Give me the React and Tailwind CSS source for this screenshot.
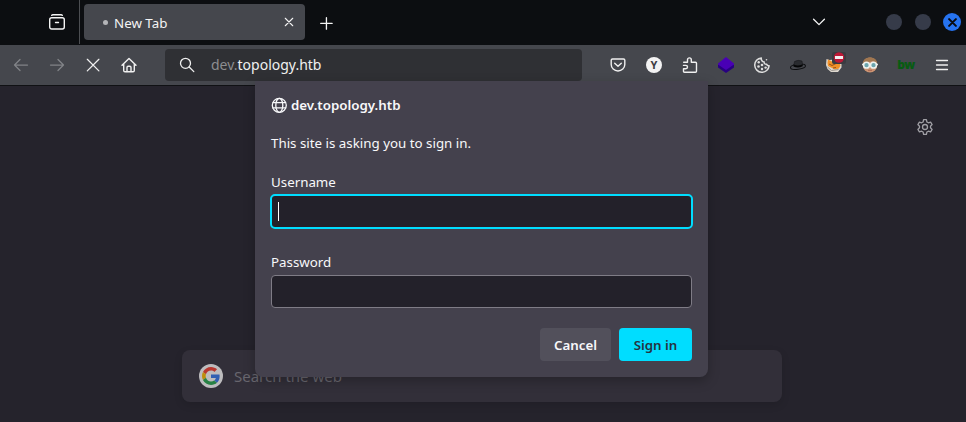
import React from 'react';

const Svg = ({ size = 16, className = '', children, sw = 1.25 }) => (
  <svg width={size} height={size} viewBox="0 0 16 16" fill="none" stroke="currentColor" strokeWidth={sw} strokeLinecap="round" strokeLinejoin="round" className={`block shrink-0 ${className}`}>
    {children}
  </svg>
);

const Slot = ({ children, className = '' }) => (
  <div className={`flex h-10 w-9 shrink-0 items-center justify-center ${className}`}>{children}</div>
);

function TitleBar() {
  return (
    <div className="flex h-[45px] shrink-0 items-start bg-[#0c0e11] text-[#f4f4f4]">
      <div className="flex h-11 w-20 items-center justify-end border-r border-[#4c4e52] pr-[14px]">
        <Svg sw={1.4}>
          <path d="M2.700 1.300C3 .8 3.500 .7 4 .7h8c.5 0 1 .1 1.300.6" />
          <rect x=".7" y="3.700" width="14.600" height="11.300" rx="2" />
          <path d="M6.500 8.500h3" />
        </Svg>
      </div>
      <div className="mt-1 ml-1 flex h-9 w-[221px] items-center rounded bg-[#45474d]">
        <span className="ml-[19px] h-[5px] w-[5px] rounded-full bg-[#b4b5b8]" />
        <span className="ml-[6px] pt-[2px] text-[13.330px] leading-5">New Tab</span>
        <Svg size={10} sw={1.700} className="mr-[11px] ml-auto"><path d="M2 2l12 12M14 2L2 14" /></Svg>
      </div>
      <Svg size={14} sw={1.500} className="mt-4 ml-[14px]"><path d="M8.500 2v13M2 8.500h13" /></Svg>
      <Svg size={14} sw={1.500} className="mt-[15px] ml-auto"><path d="M1.800 4.800L8 11l6.200-6.200" /></Svg>
      <div className="mt-[13px] mr-[5px] ml-[60px] flex items-center">
        <span className="h-4 w-4 rounded-full bg-[#363b49]" />
        <span className="ml-[13px] h-4 w-4 rounded-full bg-[#363b49]" />
        <span className="ml-[12px] flex h-[18px] w-[18px] items-center justify-center rounded-full bg-[#2673f0] text-[#090b10]">
          <Svg size={9} sw={3.600}><path d="M2 2l12 12M14 2L2 14" /></Svg>
        </span>
      </div>
    </div>
  );
}

function Toolbar() {
  return (
    <div className="flex h-[41px] shrink-0 items-start border-b border-[#101114] bg-[#45474d] pl-[3px] text-[#f0f0f0]">
      <Slot className="text-[#818387]"><Svg><path d="M14.500 8h-13M7 2.500L1.500 8 7 13.500" /></Svg></Slot>
      <Slot className="text-[#818387]"><Svg><path d="M1.500 8h13M9 2.500L14.500 8 9 13.500" /></Svg></Slot>
      <Slot><Svg><path d="M2.300 2.300l11.600 11.600M13.900 2.300L2.300 13.900" /></Svg></Slot>
      <Slot>
        <Svg sw={1.400} className="-ml-px">
          <path d="M1 8.300L8 1.400l7 6.900M2.700 7v6.500c0 .8.500 1.300 1.300 1.300h8c.8 0 1.300-.5 1.300-1.300V7" />
          <path d="M6 14.500V10.500c0-.8.5-1.200 1.200-1.200h1.600c.7 0 1.200.4 1.200 1.200v4" />
        </Svg>
      </Slot>
      <div className="mt-1 ml-[18px] flex h-8 w-[417px] items-center rounded bg-[#2f3034]">
        <Svg className="ml-[14px]" sw={1.300}><circle cx="6.500" cy="6.300" r="5" /><path d="M10.200 10l4.600 4.600" /></Svg>
        <span className="ml-4 text-[14px] leading-5"><span className="text-[#8c8d90]">dev.</span>topology.htb</span>
      </div>
      <div className="ml-[18px] flex">
        <Slot>
          <Svg sw={1.400}><path d="M2.500 2h11c.8 0 1.300.5 1.300 1.300V7.500a6.800 6.500 0 01-13.600 0V3.300C1.200 2.500 1.700 2 2.500 2z" /><path d="M4.700 6.200L8 9.300l3.300-3.100" /></Svg>
        </Slot>
        <Slot>
          <span className="flex h-4 w-4 items-center justify-center rounded-full bg-[#f3f3f3] text-[11px] leading-4 font-bold text-[#3c3e43]">Y</span>
        </Slot>
        <Slot>
          <Svg sw={1.400}><path d="M1.700 5.200h3.800V2.800a1.900 1.900 0 013.800 0v2.400h4.200q1 0 1 1v8q0 1-1 1h-11q-1 0-1-1v-2.400h2.300a1.700 1.700 0 000-3.400H1.500" /></Svg>
        </Slot>
        <Slot>
          <svg width="16" height="16" viewBox="0 0 16 16"><path d="M0 7.500h16v3L8 16 0 10.500z" fill="#280080" /><path d="M8 0l8 6.500v1L8 13 0 7.500v-1z" fill="#4900b5" /></svg>
        </Slot>
        <Slot className="text-[#dedede]">
          <Svg sw={1.500}>
            <path d="M7.300.9A7.200 7.200 0 1015.100 8.800c-1.400.2-2.200-.5-2.400-1.600-1.700.2-2.800-.7-2.500-2.300C8.300 4.700 7 3.200 7.300.9z" />
            <g fill="currentColor" stroke="none"><circle cx="4.700" cy="5.300" r="1.200" /><circle cx="8" cy="8" r="1.300" /><circle cx="4.500" cy="9.500" r="1.300" /><circle cx="8" cy="12" r="1.200" /><circle cx="11.600" cy="10.600" r="1.200" /><circle cx="12.500" cy="2.800" r=".8" /></g>
          </Svg>
        </Slot>
        <Slot>
          <svg width="16" height="16" viewBox="0 0 16 16"><ellipse cx="8" cy="9.800" rx="7.500" ry="2.500" fill="none" stroke="#0c0d0f" strokeWidth="1" transform="rotate(-7 8 10)" /><path d="M3.700 8.500L4.500 4.500Q8 2.500 12 4l.7 4.300Q8 11 3.700 8.500z" fill="#292b2f" stroke="#141518" strokeWidth=".5" /><path d="M3.700 7.500Q8 9.500 12.600 7.200v2Q8 11.500 3.500 9.500z" fill="#050607" /></svg>
        </Slot>
        <Slot>
          <svg width="24" height="24" viewBox="0 0 24 24" className="overflow-visible">
            <path d="M4.500 6l3 1 9-1 3 3.500v5l-3.500 4.500H9l-3.500-3L4 12z" fill="#ded8cf" />
            <path d="M6 6.500l4 2h7l1.500 4-1.500 3-4 1-7-3.500-.5-3z" fill="#f29127" />
            <path d="M5.500 14l4 3.500 7-1" fill="none" stroke="#9a958e" strokeWidth="1" />
            <path d="M7 11l3 1.500 4-2M11 15l3-.5" stroke="#94501b" fill="none" />
            <rect x="10" y="-1" width="14" height="12" rx="2" fill="#3a3c41" />
            <circle cx="17" cy="4.500" r="5.200" fill="#bd1836" />
            <rect x="13" y="3" width="8" height="3" fill="#f2eef0" />
          </svg>
        </Slot>
        <Slot>
          <svg width="16" height="16" viewBox="0 0 16 16"><ellipse cx="8" cy="8" rx="7.300" ry="7.600" fill="#cb9372" /><path d="M.8 6.500C1 2.500 4 .5 8 .5s7 2 7.200 6L11 4 7 5z" fill="#a17750" /><path d="M0 6.700h16v1.500H0z" fill="#e0e6e6" /><circle cx="4.500" cy="8.200" r="2.900" fill="#6ba5ae" stroke="#edf2ef" strokeWidth="1.500" /><circle cx="11.500" cy="8.200" r="2.900" fill="#6ba5ae" stroke="#edf2ef" strokeWidth="1.500" /><path d="M6 13.300h4" stroke="#a76451" /></svg>
        </Slot>
        <Slot>
          <span className="-mt-px text-[12px] leading-4 font-black tracking-[-0.5px] text-[#075b12]">bw</span>
        </Slot>
        <Slot><Svg sw={1.300}><path d="M2.500 3.500h11M2.500 8h11M2.500 12.500h11" /></Svg></Slot>
      </div>
    </div>
  );
}

function NewTabPage() {
  return (
    <div className="flex flex-1 flex-col bg-[#25232c]">
      <div className="mt-[33px] mr-[33px] self-end text-[#a09fa5]">
        <Svg sw={1.300}>
          <path d="M6.600 .7h2.800l.5 2.300 1.500.8 2.200-.7L15.100 5.500l-1.600 1.700v1.600l1.600 1.700-1.500 2.400-2.200-.7-1.500.8-.5 2.300H6.600l-.5-2.300-1.500-.8-2.200.7L.9 10.500l1.600-1.700V7.200L.9 5.500l1.500-2.400 2.200.7 1.500-.8z" />
          <circle cx="8" cy="8" r="2.500" />
        </Svg>
      </div>
      <div className="mt-auto mb-5 ml-[182px] flex h-[52px] w-[600px] items-center rounded-lg bg-[#322f39] shadow-[0_3px_8px_rgba(0,0,0,0.12)]">
        <span className="ml-[17px] flex h-6 w-6 items-center justify-center rounded-full bg-[#bdbcbe]">
          <svg width="18" height="18" viewBox="0 0 48 48">
            <path fill="#b93830" d="M24 9.500c3.540 0 6.710 1.220 9.210 3.600l6.850-6.850C35.900 2.380 30.470 0 24 0 14.620 0 6.510 5.380 2.560 13.220l7.980 6.190C12.430 13.720 17.740 9.500 24 9.500z" />
            <path fill="#315fb2" d="M46.980 24.550c0-1.570-.15-3.090-.38-4.550H24v9.020h12.940c-.58 2.960-2.260 5.480-4.780 7.180l7.730 6c4.510-4.180 7.090-10.360 7.090-17.650z" />
            <path fill="#bd8e0c" d="M10.530 28.590A14.500 14.500 0 019.770 24c0-1.600.27-3.140.76-4.590l-7.980-6.190A24 24 0 000 24c0 3.870.92 7.530 2.560 10.780z" />
            <path fill="#278044" d="M24 48c6.480 0 11.930-2.130 15.890-5.810l-7.730-6c-2.150 1.450-4.920 2.300-8.160 2.300-6.260 0-11.570-4.220-13.470-9.910l-7.980 6.190C6.510 42.620 14.620 48 24 48z" />
          </svg>
        </span>
        <span className="ml-[11px] text-[15px] leading-5 text-[#68666e]">Search the web</span>
      </div>
    </div>
  );
}

function SignInDialog() {
  return (
    <div className="absolute top-[81px] left-[255px] flex h-[296px] w-[453px] flex-col rounded-b-lg bg-[#44414d] px-4 text-[13.330px] leading-5 text-[#f8f8fa] shadow-[0_4px_12px_rgba(0,0,0,0.25)]">
      <div className="mt-[14px] flex items-center font-semibold">
        <Svg className="mr-1" sw={1.300}>
          <circle cx="8.300" cy="8.300" r="7" /><ellipse cx="8.300" cy="8.300" rx="3.500" ry="7" /><path d="M2 5.700h12.600M2 10.900h12.600" />
        </Svg>
        dev.topology.htb
      </div>
      <p className="mt-[18px]">This site is asking you to sign in.</p>
      <label className="mt-[19px]">Username</label>
      <div className="-mx-px mt-[2px] flex h-[35px] shrink-0 items-center rounded-[5px] border-2 border-[#00ddff] bg-[#23212a] pl-[6px]">
        <span className="h-[19px] w-px bg-white" />
      </div>
      <label className="mt-[23px]">Password</label>
      <div className="mt-[3px] h-[33px] shrink-0 rounded border border-[#7f7c86] bg-[#23212a]" />
      <div className="mt-5 flex justify-end gap-2 font-semibold">
        <button className="h-[33px] w-[71px] rounded bg-[#52505b]">Cancel</button>
        <button className="h-[33px] w-[73px] rounded bg-[#00ddff] text-[#25323f]">Sign in</button>
      </div>
    </div>
  );
}

export default function App() {
  return (
    <div className="relative flex h-[422px] w-[966px] flex-col overflow-hidden font-['Noto_Sans',sans-serif]">
      <TitleBar />
      <Toolbar />
      <NewTabPage />
      <SignInDialog />
    </div>
  );
}
